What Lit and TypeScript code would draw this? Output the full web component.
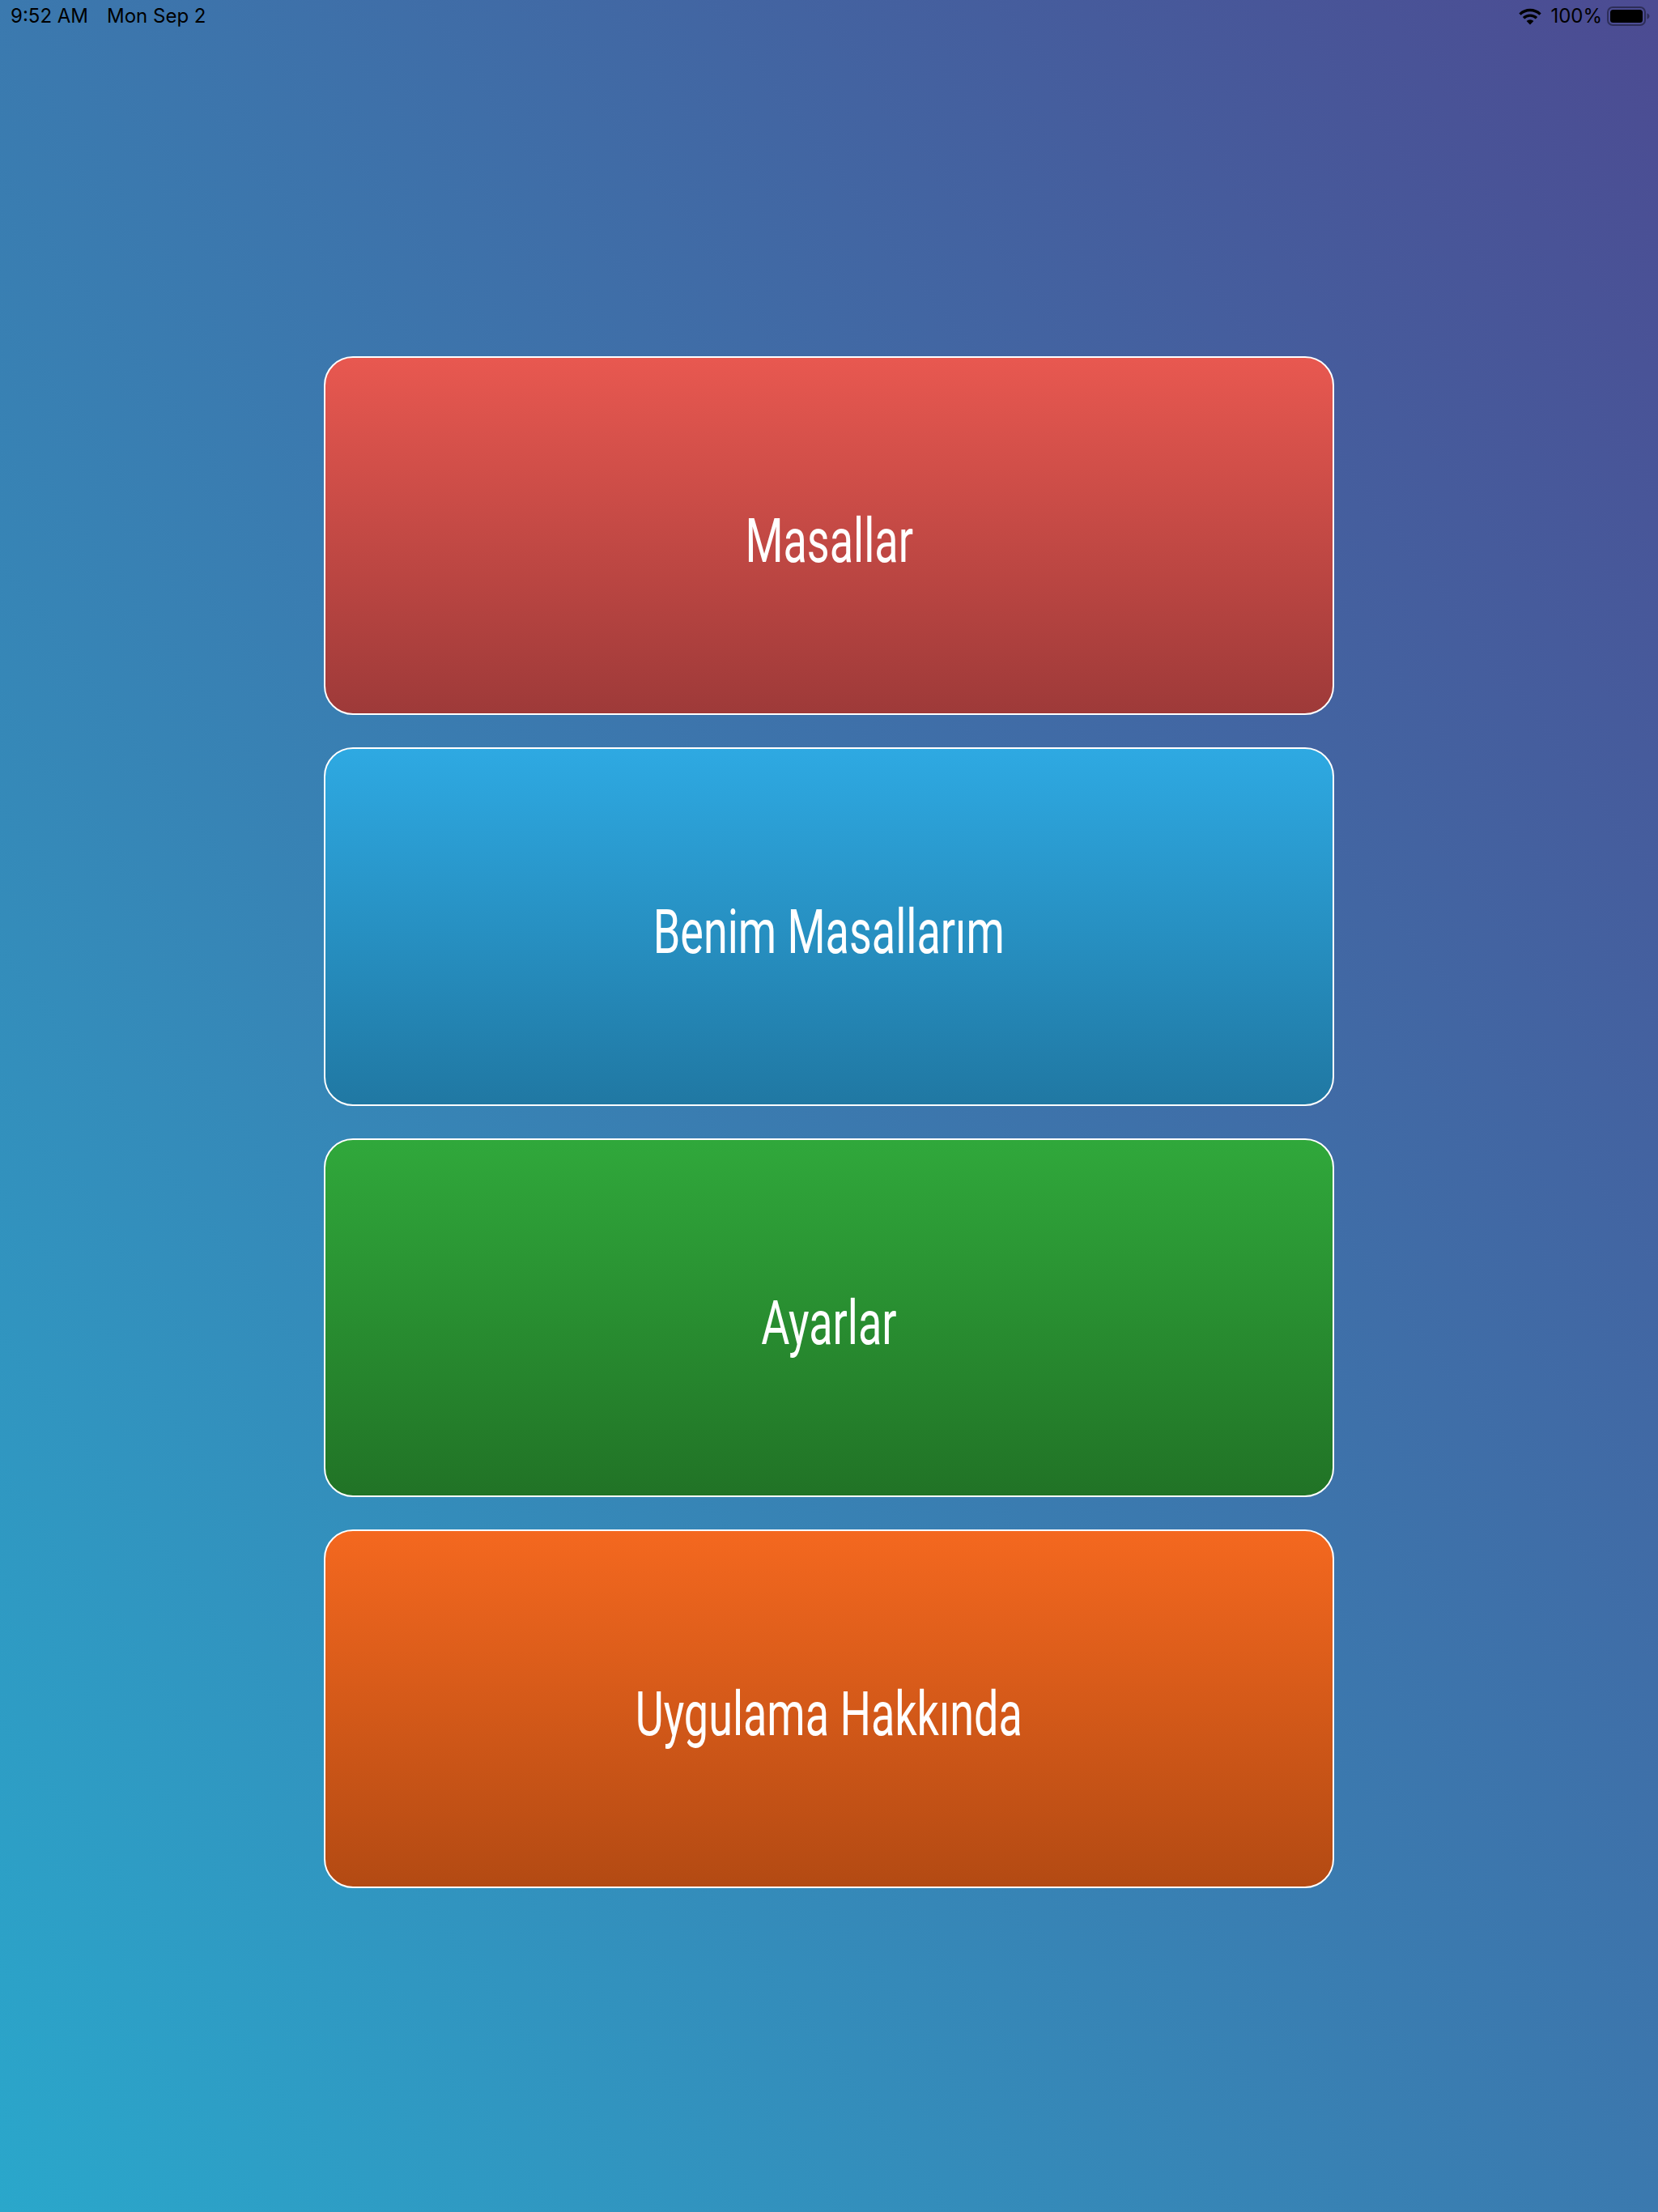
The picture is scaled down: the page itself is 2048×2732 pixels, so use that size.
import { LitElement, html, css } from "lit";
import { customElement } from "lit/decorators.js";

@customElement("app-root")
export class AppRoot extends LitElement {
  static styles = css`
    :host {
      display: block;
      width: 2048px;
      height: 2732px;
      background: linear-gradient(to top right, #2aa7cb 0%, #4c4b92 100%);
      font-family: Inter, "Liberation Sans", sans-serif;
      overflow: hidden;
    }
    .status {
      height: 40px;
      box-sizing: border-box;
      padding: 0 10px 0 13px;
      display: flex;
      align-items: center;
      color: #000;
      font-size: 24px;
      line-height: 40px;
    }
    .time { margin-right: 23px; }
    .spacer { flex: 1; }
    .wifi { width: 28px; height: 21px; margin-right: 11px; display: block; }
    .pct { margin-right: 6px; }
    .battery { width: 53px; height: 24px; display: block; }
    .menu {
      display: flex;
      flex-direction: column;
      gap: 40px;
      width: 1248px;
      margin: 400px auto 0;
    }
    .btn {
      height: 443px;
      box-sizing: border-box;
      border: 2px solid #fff;
      border-radius: 36px;
      padding-top: 12px;
      display: flex;
      align-items: center;
      justify-content: center;
      color: #fff;
    }
    .red { background: linear-gradient(#e85850, #9e3a39); }
    .blue { background: linear-gradient(#2ea9e2, #2078a3); }
    .green { background: linear-gradient(#30a83b, #217326); }
    .orange { background: linear-gradient(#f4681f, #b34a13); }
    .label {
      font-family: Roboto, "Liberation Sans", sans-serif;
      font-size: 76px;
      font-weight: 400;
      line-height: 1;
      white-space: nowrap;
      transform: scaleX(0.71);
    }
  `;

  render() {
    const items = [
      ["red", "Masallar"],
      ["blue", "Benim Masallarım"],
      ["green", "Ayarlar"],
      ["orange", "Uygulama Hakkında"],
    ];
    return html`
      <div class="status">
        <span class="time">9:52 AM</span>
        <span>Mon Sep 2</span>
        <span class="spacer"></span>
        <svg class="wifi" viewBox="0 0 28 21" fill="none" stroke="#000" stroke-width="3.4">
          <path d="M1.5 7.6a18 18 0 0 1 25 0" />
          <path d="M6 12.3a11.6 11.6 0 0 1 16 0" />
          <path d="M14 20.5l-4.4-4.5a6.2 6.2 0 0 1 8.8 0z" fill="#000" stroke="none" />
        </svg>
        <span class="pct">100%</span>
        <svg class="battery" viewBox="0 0 53 24">
          <rect x="1" y="1" width="46" height="22" rx="6" fill="none" stroke="#000" stroke-opacity="0.4" stroke-width="2" />
          <rect x="4" y="4" width="40" height="16" rx="3.5" fill="#000" />
          <path d="M49.5 8.5c2 .6 3 2 3 3.5s-1 2.9-3 3.5z" fill="#000" fill-opacity="0.4" />
        </svg>
      </div>
      <div class="menu">
        ${items.map(
          ([c, t]) => html`<div class="btn ${c}"><span class="label">${t}</span></div>`
        )}
      </div>
    `;
  }
}
